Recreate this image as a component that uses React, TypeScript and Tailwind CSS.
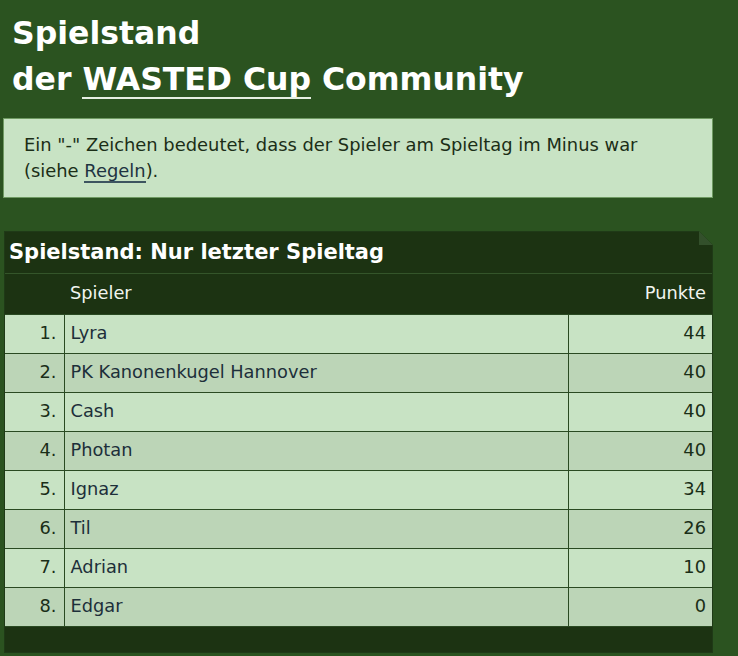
const rows: [number, string, number][] = [
  [1, "Lyra", 44],
  [2, "PK Kanonenkugel Hannover", 40],
  [3, "Cash", 40],
  [4, "Photan", 40],
  [5, "Ignaz", 34],
  [6, "Til", 26],
  [7, "Adrian", 10],
  [8, "Edgar", 0],
];

export default function App() {
  return (
    <div
      className="min-h-[656px] bg-[#2b5320] pl-[3px] pt-[10px] pb-[4px]"
      style={{ fontFamily: '"DejaVu Sans", Verdana, sans-serif' }}
    >
      <div className="w-[710px]">
        <h1 className="pl-[9px] text-[31.5px] leading-[46px] font-bold text-white">
          Spielstand
          <br />
          der <span className="border-b-2 border-[#e6efe2]">WASTED Cup</span> Community
        </h1>

        <div className="mt-[16px] border border-[#6f9a62] bg-[#c8e3c4] px-[20px] py-[13px] text-[17.9px] leading-[26px] text-[#1b2e17]">
          Ein "-" Zeichen bedeutet, dass der Spieler am Spieltag im Minus war
          <br />
          (siehe <span className="border-b-2 border-[#3d5560] text-[#1e3341]">Regeln</span>).
        </div>

        <div className="relative mt-[33px] ml-px border border-[#1f3a17] bg-[#1c3312]">
          <div className="absolute right-[-1px] top-[-1px] h-[14px] w-[14px] bg-[#33502b] [clip-path:polygon(0_0,100%_100%,0_100%)]" />
          <div className="absolute right-[-1px] top-[-1px] h-[14px] w-[14px] bg-[#2b5320] [clip-path:polygon(0_0,100%_0,100%_100%)]" />
          <h2 className="h-[41px] pl-[4px] text-[21px] leading-[41px] font-bold text-white">
            Spielstand: Nur letzter Spieltag
          </h2>
          <div className="h-px bg-[#34552a]" />
          <table className="w-full border-collapse text-[17.8px]">
            <thead>
              <tr className="h-[40px] text-[#f1f5ef]">
                <th className="w-[59px]" />
                <th className="pl-[6px] text-left font-normal">Spieler</th>
                <th className="w-[144px] pr-[6px] text-right font-normal">Punkte</th>
              </tr>
            </thead>
            <tbody>
              {rows.map(([rank, name, pts], i) => (
                <tr
                  key={rank}
                  className={`h-[39px] ${i % 2 === 0 ? "bg-[#c8e3c4]" : "bg-[#bcd5b7]"}`}
                >
                  <td className="border-y border-r border-[#2a4a22] pr-[7px] text-right text-[#1a2e17]">
                    {rank}.
                  </td>
                  <td className="border border-[#2a4a22] pl-[6px] text-[#1d2f3a]">{name}</td>
                  <td className="border-y border-l border-[#2a4a22] pr-[6px] text-right text-[#1a2e17]">
                    {pts}
                  </td>
                </tr>
              ))}
            </tbody>
          </table>
          <div className="h-[25px]" />
        </div>
      </div>
    </div>
  );
}
